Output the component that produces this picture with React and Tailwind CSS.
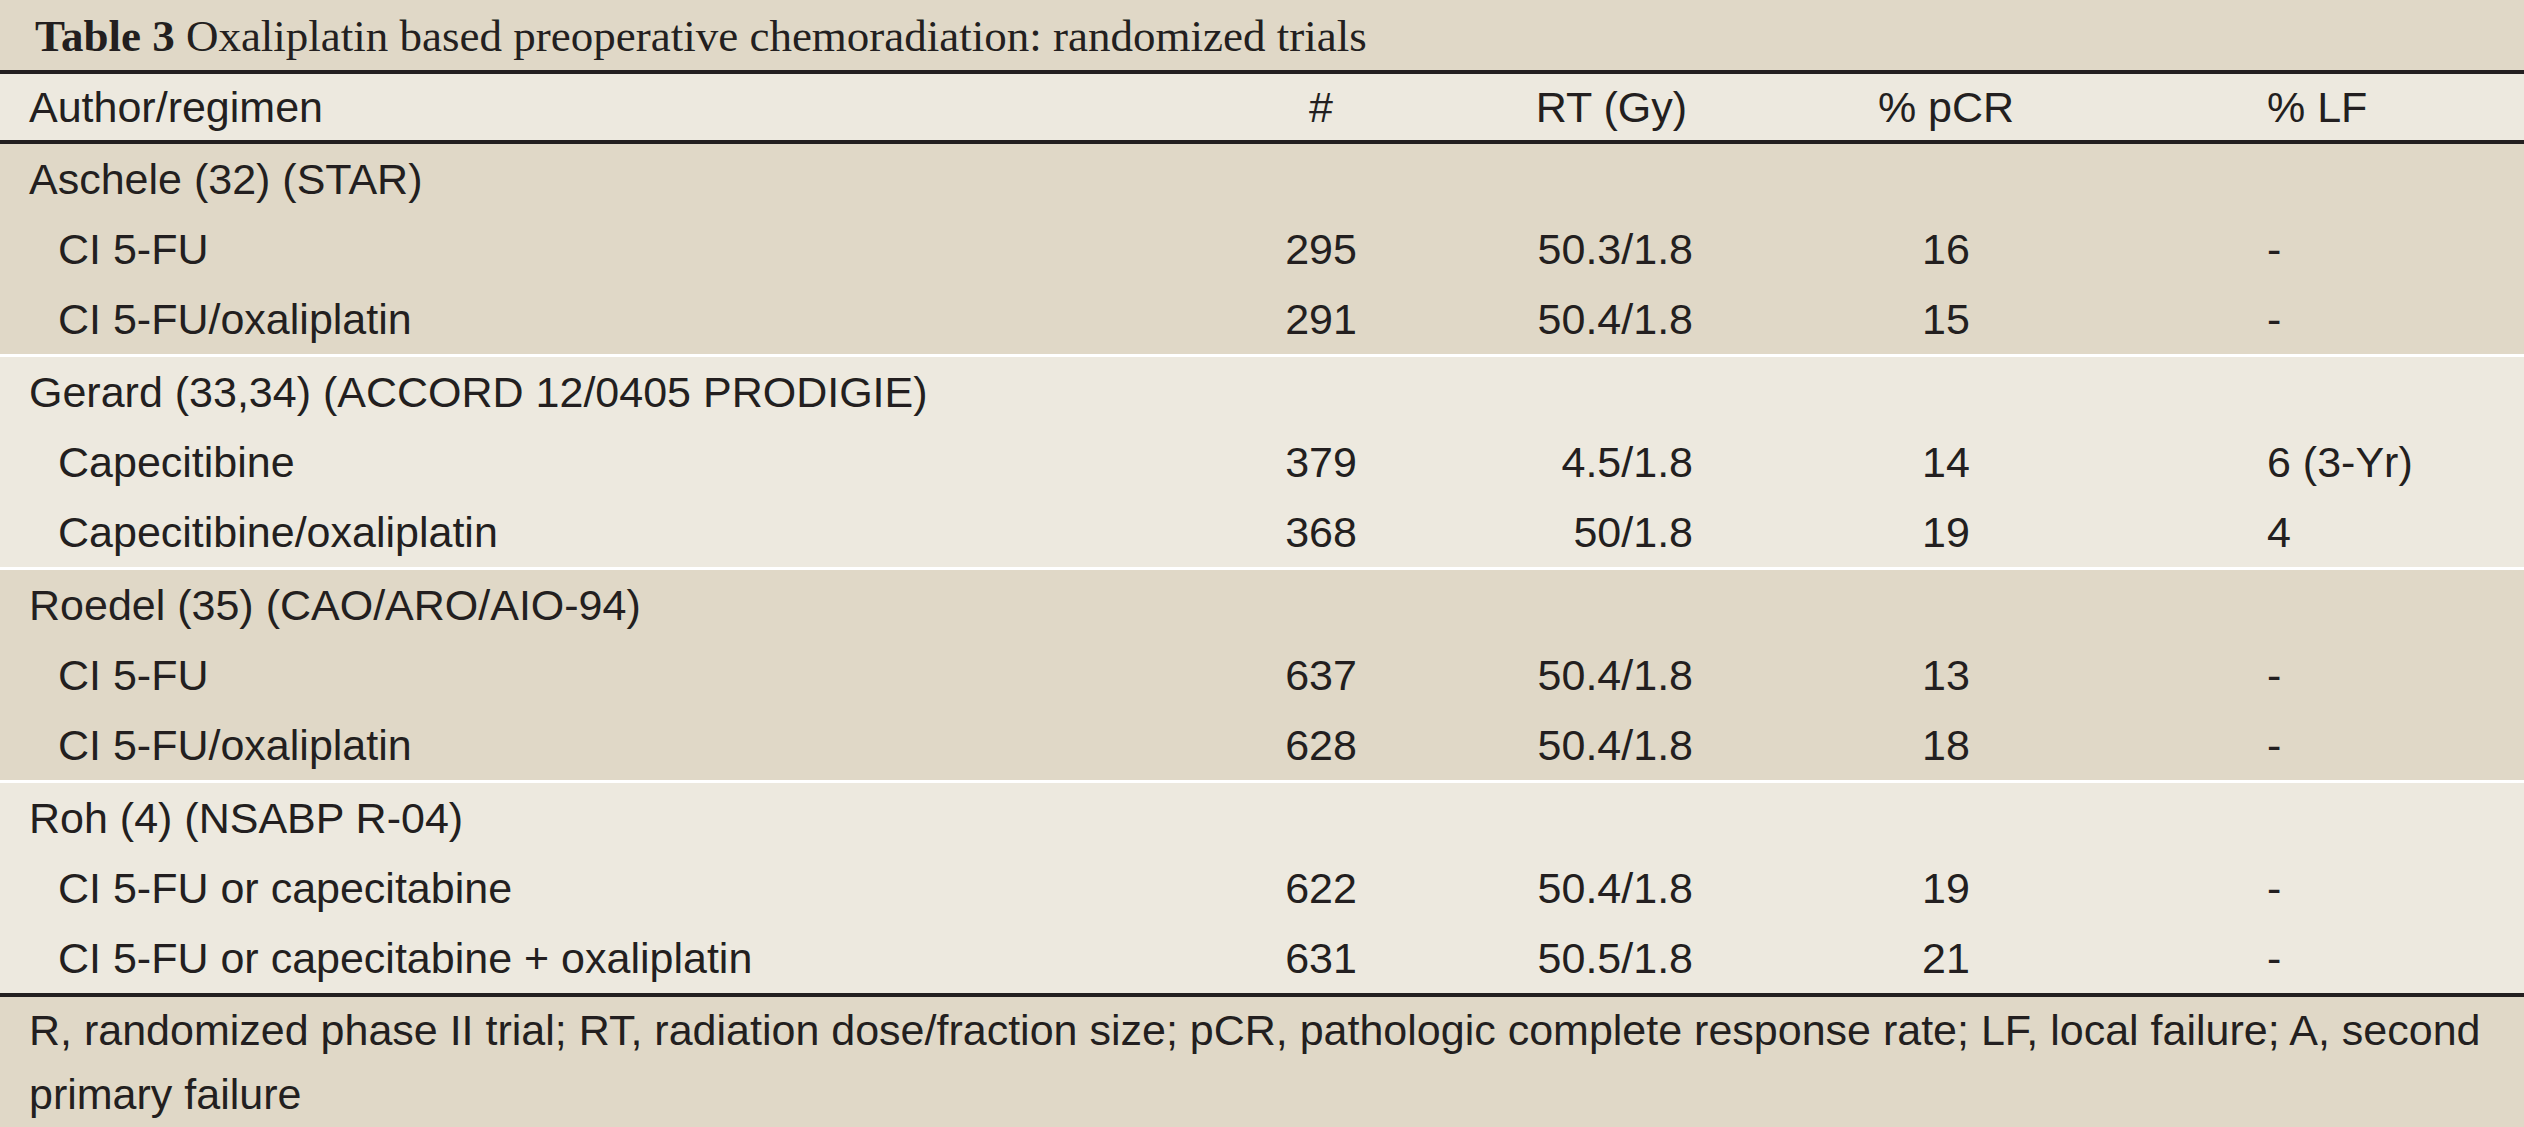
const groups = [
  {
    name: 'Aschele (32) (STAR)',
    bg: 'bg-[#e0d8c7]',
    rows: [
      ['CI 5-FU', '295', '50.3/1.8', '16', '-'],
      ['CI 5-FU/oxaliplatin', '291', '50.4/1.8', '15', '-'],
    ],
  },
  {
    name: 'Gerard (33,34) (ACCORD 12/0405 PRODIGIE)',
    bg: 'bg-[#ede9df]',
    rows: [
      ['Capecitibine', '379', '4.5/1.8', '14', '6 (3-Yr)'],
      ['Capecitibine/oxaliplatin', '368', '50/1.8', '19', '4'],
    ],
  },
  {
    name: 'Roedel (35) (CAO/ARO/AIO-94)',
    bg: 'bg-[#e0d8c7]',
    rows: [
      ['CI 5-FU', '637', '50.4/1.8', '13', '-'],
      ['CI 5-FU/oxaliplatin', '628', '50.4/1.8', '18', '-'],
    ],
  },
  {
    name: 'Roh (4) (NSABP R-04)',
    bg: 'bg-[#ede9df]',
    rows: [
      ['CI 5-FU or capecitabine', '622', '50.4/1.8', '19', '-'],
      ['CI 5-FU or capecitabine + oxaliplatin', '631', '50.5/1.8', '21', '-'],
    ],
  },
];

const cols = 'grid grid-cols-[1200px_242px_251px_506px_325px]';

const Row = ({ cells }) => (
  <div className={`${cols} h-[70px] leading-[70px] whitespace-nowrap`}>
    <div className="pl-[58px]">{cells[0]}</div>
    <div className="text-center">{cells[1]}</div>
    <div className="text-right">{cells[2]}</div>
    <div className="text-center">{cells[3]}</div>
    <div className="pl-[68px]">{cells[4]}</div>
  </div>
);

const App = () => {
  return (
    <div className="w-[2524px] h-[1127px] bg-[#e0d8c7] font-['Liberation_Sans',Arial,sans-serif] text-[43px] text-[#231f20]">
      <div className="h-[74px] border-b-4 border-[#231f20] bg-[#e0d8c7] pl-[35px] pt-[2px] font-['Liberation_Serif','Times_New_Roman',serif] text-[45px] leading-[68px] whitespace-nowrap">
        <span className="font-bold">Table 3</span> Oxaliplatin based preoperative chemoradiation: randomized trials
      </div>
      <div className={`${cols} h-[70px] border-b-4 border-[#231f20] bg-[#ede9df] leading-[66px] whitespace-nowrap`}>
        <div className="pl-[29px]">Author/regimen</div>
        <div className="text-center">#</div>
        <div className="text-right pr-[6px]">RT (Gy)</div>
        <div className="text-center">% pCR</div>
        <div className="pl-[68px]">% LF</div>
      </div>
      {groups.map((g, i) => (
        <div
          key={g.name}
          className={`${g.bg} ${i === groups.length - 1 ? 'border-b-4 border-[#231f20]' : 'border-b-[3px] border-white'}`}
        >
          <div className="h-[70px] leading-[70px] pl-[29px] whitespace-nowrap">{g.name}</div>
          {g.rows.map((r, j) => (
            <Row key={j} cells={r} />
          ))}
        </div>
      ))}
      <div className="bg-[#e0d8c7] pl-[29px] pt-[1px] leading-[64px]">
        <div className="whitespace-nowrap">
          R, randomized phase II trial; RT, radiation dose/fraction size; pCR, pathologic complete response rate; LF, local failure; A, second
        </div>
        <div className="whitespace-nowrap">primary failure</div>
      </div>
    </div>
  );
};

export default App;
